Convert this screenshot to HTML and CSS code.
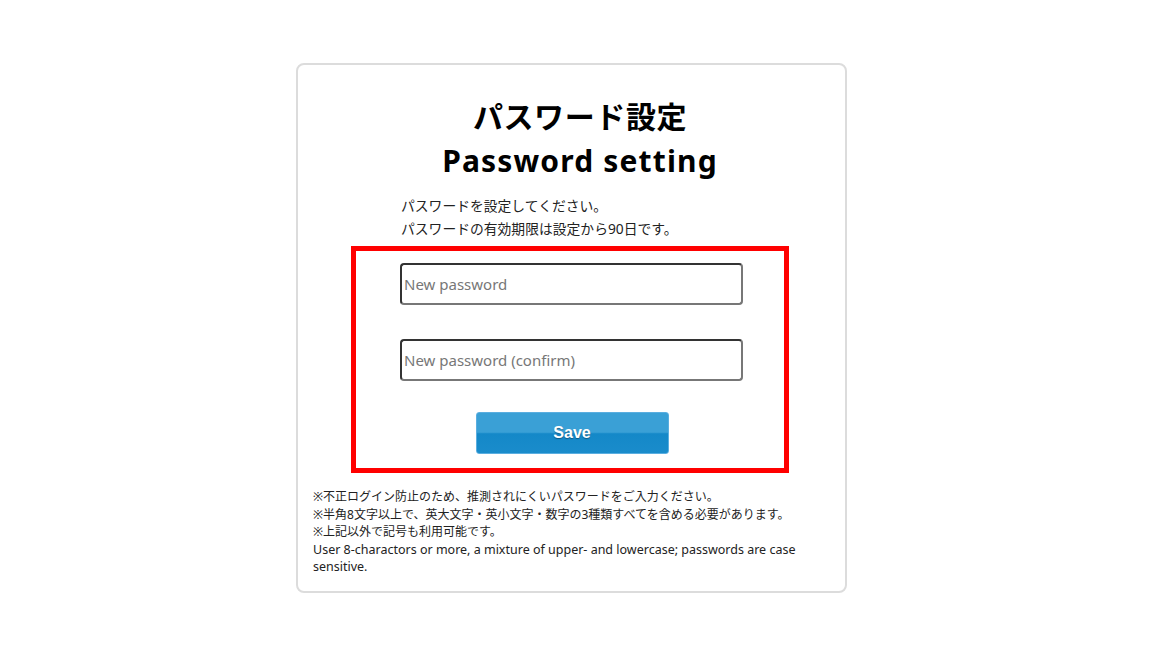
FILE: index.html
```html
<!DOCTYPE html>
<html lang="ja">
<head>
<meta charset="utf-8">
<title>パスワード設定</title>
<link rel="stylesheet" href="styles.css">
</head>
<body>
<div class="page">
  <div class="card">
    <h1 class="title"><span class="title-ja">パスワード設定</span><br><span class="title-en">Password setting</span></h1>
    <div class="intro">
      <p>パスワードを設定してください。</p>
      <p>パスワードの有効期限は設定から90日です。</p>
    </div>
    <div class="highlight">
      <form class="form">
        <input class="field" type="password" placeholder="New password">
        <input class="field" type="password" placeholder="New password (confirm)">
        <button class="save" type="button">Save</button>
      </form>
    </div>
    <div class="notes">
      <p>※不正ログイン防止のため、推測されにくいパスワードをご入力ください。</p>
      <p>※半角8文字以上で、英大文字・英小文字・数字の3種類すべてを含める必要があります。</p>
      <p>※上記以外で記号も利用可能です。</p>
      <p class="notes-en">User 8-charactors or more, a mixture of upper- and lowercase; passwords are case sensitive.</p>
    </div>
  </div>
</div>
</body>
</html>
```
FILE: styles.css
```css
* { box-sizing: border-box; }
html, body { margin: 0; padding: 0; background: #fff; }
body {
  font-family: "Noto Sans", "Noto Sans CJK JP", sans-serif;
  color: #222;
}
p { margin: 0; }
.page {
  display: flex;
  justify-content: flex-start;
  padding-top: 63px;
  padding-left: 296px;
}
.card {
  width: 551px;
  height: 530px;
  border: 2px solid #dcdcdc;
  border-radius: 8px;
  padding: 30px 15px 12px 15px;
  display: flex;
  flex-direction: column;
}
.title {
  margin: 0;
  text-align: center;
  font-size: 30px;
  line-height: 44px;
  font-weight: 700;
  color: #000;
  padding-left: 17px;
}
.title-ja { letter-spacing: 0.6px; }
.title-en { letter-spacing: 1.15px; }
.intro {
  margin: 11px 0 0 88px;
  font-size: 13.8px;
  line-height: 23px;
  color: #222;
}
.highlight {
  margin: 6px 0 0 38px;
  width: 438px;
  border: 5px solid #ff0000;
  padding: 12px 41px 14px 44px;
}
.form {
  display: flex;
  flex-direction: column;
  align-items: stretch;
}
.field {
  height: 42px;
  width: 343px;
  border: 2px solid #777;
  border-top-color: #333;
  border-left-color: #333;
  border-radius: 4px;
  padding: 0 2px;
  font-family: "Noto Sans", sans-serif;
  font-size: 15px;
  color: #222;
  background: #fff;
}
.field + .field { margin-top: 34px; }
.field::placeholder { color: #777; }
.save {
  align-self: center;
  margin-top: 31px;
  margin-left: 1px;
  width: 193px;
  height: 42px;
  border: 1px solid #5aaee0;
  border-radius: 3px;
  background: linear-gradient(to bottom, #3aa0d6 0%, #3aa0d6 48%, #1488c8 52%, #1a8ccb 100%);
  color: #fff;
  font-family: "Liberation Sans", Arial, sans-serif;
  font-weight: 700;
  font-size: 16px;
  text-shadow: 0 1px 1px rgba(0,0,0,0.35);
}
.notes {
  margin-top: 15px;
  font-size: 12px;
  line-height: 17.5px;
  color: #222;
}
.notes .notes-en { font-size: 12.5px; }
```
